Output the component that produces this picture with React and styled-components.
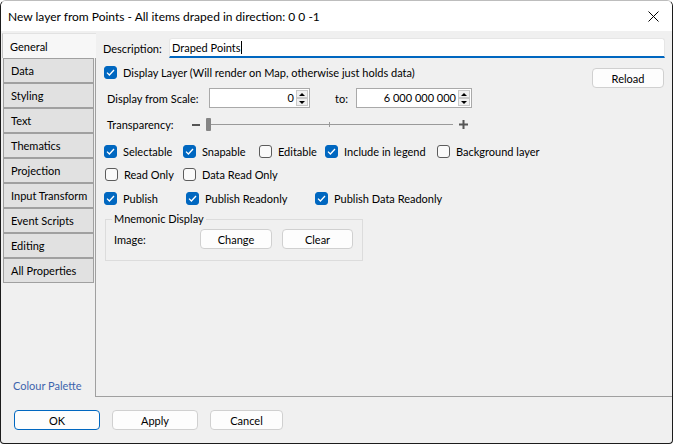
import React from "react";
import styled, { createGlobalStyle } from "styled-components";

const ACCENT = "#0067c0";
const LINE = "#a0a0a0";

const tabs = [
  "Data",
  "Styling",
  "Text",
  "Thematics",
  "Projection",
  "Input Transform",
  "Event Scripts",
  "Editing",
  "All Properties",
];

const GlobalStyle = createGlobalStyle`
  html, body { margin: 0; padding: 0; background: #ffffff; }
  body {
    font-family: Lato, "Liberation Sans", sans-serif;
    font-size: 11px;
    color: #000;
  }
  * { box-sizing: border-box; }
`;

const Check = ({ checked, label, w }) => (
  <CheckItem $w={w}>
    <Box $checked={checked}>
      {checked && (
        <svg width="9" height="7" viewBox="0 0 9 7">
          <path d="M1 3.6 L3.4 6 L8 1" fill="none" stroke="#fff" strokeWidth="1.3" />
        </svg>
      )}
    </Box>
    <span>{label}</span>
  </CheckItem>
);

const Spin = ({ value, w }) => (
  <SpinBox $w={w}>
    <SpinValue>{value}</SpinValue>
    <SpinButtons>
      <SpinHalf>
        <Arrow $up />
      </SpinHalf>
      <SpinHalf>
        <Arrow />
      </SpinHalf>
    </SpinButtons>
  </SpinBox>
);

const App = () => {
  return (
    <>
      <GlobalStyle />
      <Window>
        <TitleBar>
          <Title>New layer from Points - All items draped in direction: 0 0 -1</Title>
          <svg width="11" height="11" viewBox="0 0 11 11">
            <path d="M0.5 0.5 L10.5 10.5 M10.5 0.5 L0.5 10.5" stroke="#000" strokeWidth="1" />
          </svg>
        </TitleBar>
        <Main>
          <TabColumn>
            <ActiveTab>General</ActiveTab>
            <TabStack>
              {tabs.map((t) => (
                <Tab key={t}>{t}</Tab>
              ))}
              <PaletteLink>Colour Palette</PaletteLink>
            </TabStack>
          </TabColumn>
          <Panel>
            <DescRow>
              <DescLabel>Description:</DescLabel>
              <DescInput>
                Draped Points<Caret />
              </DescInput>
            </DescRow>
            <LayerRow>
              <Check checked label="Display Layer (Will render on Map, otherwise just holds data)" />
              <Button $w={72} $mt={2}>Reload</Button>
            </LayerRow>
            <ScaleRow>
              <FieldLabel $w={102}>Display from Scale:</FieldLabel>
              <Spin value="0" w={101} />
              <ToLabel>to:</ToLabel>
              <Spin value="6 000 000 000" w={116} />
            </ScaleRow>
            <SliderRow>
              <FieldLabel $w={85}>Transparency:</FieldLabel>
              <Minus />
              <Track>
                <Thumb />
                <Tick />
              </Track>
              <svg width="9" height="9" viewBox="0 0 9 9" style={{ marginLeft: 6 }}>
                <path d="M0 4.5 H9 M4.5 0 V9" stroke="#555" strokeWidth="2" />
              </svg>
            </SliderRow>
            <CheckRow $mt={14}>
              <Check checked label="Selectable" w={79} />
              <Check checked label="Snapable" w={76} />
              <Check label="Editable" w={66} />
              <Check checked label="Include in legend" w={112} />
              <Check label="Background layer" />
            </CheckRow>
            <CheckRow $mt={10} $pl={2}>
              <Check label="Read Only" w={78} />
              <Check label="Data Read Only" />
            </CheckRow>
            <CheckRow $mt={11}>
              <Check checked label="Publish" w={82} />
              <Check checked label="Publish Readonly" w={129} />
              <Check checked label="Publish Data Readonly" />
            </CheckRow>
            <Group>
              <Legend>Mnemonic Display</Legend>
              <GroupRow>
                <FieldLabel $w={86}>Image:</FieldLabel>
                <Button $w={72}>Change</Button>
                <Button $w={71}>Clear</Button>
              </GroupRow>
            </Group>
          </Panel>
        </Main>
        <ButtonBar>
          <Button $w={86} $primary>OK</Button>
          <Button $w={86}>Apply</Button>
          <Button $w={73}>Cancel</Button>
        </ButtonBar>
      </Window>
    </>
  );
};

const Window = styled.div`
  width: 673px;
  height: 444px;
  display: flex;
  flex-direction: column;
  background: #f0f0f0;
  border: 1px solid #1c1c1c;
  border-top-color: #bdbdbd;
  border-radius: 6px 6px 4px 4px;
  overflow: hidden;
`;

const TitleBar = styled.div`
  height: 30px;
  flex-shrink: 0;
  background: #fff;
  display: flex;
  align-items: center;
  justify-content: space-between;
  padding: 0 13px 0 7px;
`;

const Title = styled.div`
  font-size: 12px;
  color: #000;
`;

const Main = styled.div`
  height: 366px;
  flex-shrink: 0;
  display: flex;
`;

const TabColumn = styled.div`
  width: 95px;
  flex-shrink: 0;
  display: flex;
  flex-direction: column;
`;

const ActiveTab = styled.div`
  margin-top: 2px;
  margin-left: 1px;
  height: 25px;
  flex-shrink: 0;
  background: #f7f7f7;
  border-left: 1px solid #c4c4c4;
  border-top: 1px solid #e2e2e2;
  padding-left: 7px;
  display: flex;
  align-items: center;
`;

const TabStack = styled.div`
  flex: 1;
  display: flex;
  flex-direction: column;
  padding-left: 2px;
  padding-bottom: 4px;
  border-right: 1px solid ${LINE};
`;

const Tab = styled.div`
  width: 91px;
  height: 25px;
  flex-shrink: 0;
  background: #e1e1e1;
  border: 1px solid ${LINE};
  padding-left: 7px;
  display: flex;
  align-items: center;
  white-space: nowrap;
`;

const PaletteLink = styled.div`
  margin-top: auto;
  margin-left: 10px;
  color: #3d64ad;
  line-height: 14px;
`;

const Panel = styled.div`
  flex: 1;
  display: flex;
  flex-direction: column;
  padding: 7px 7px 0 7px;
  border-bottom: 1px solid ${LINE};
`;

const DescRow = styled.div`
  display: flex;
  align-items: center;
  height: 20px;
`;

const DescLabel = styled.div`
  width: 66px;
  flex-shrink: 0;
`;

const DescInput = styled.div`
  flex: 1;
  height: 20px;
  background: #fff;
  border: 1px solid #e6e6e6;
  border-bottom: 2px solid ${ACCENT};
  border-radius: 3px 3px 0 0;
  padding-left: 2px;
  display: flex;
  align-items: center;
`;

const Caret = styled.span`
  display: inline-block;
  width: 1px;
  height: 13px;
  background: #000;
`;

const LayerRow = styled.div`
  margin-top: 8px;
  height: 22px;
  display: flex;
  align-items: flex-start;
  justify-content: space-between;
  padding-left: 1px;
  padding-right: 1px;
`;

const ScaleRow = styled.div`
  height: 20px;
  display: flex;
  align-items: center;
  padding-left: 4px;
`;

const FieldLabel = styled.div`
  width: ${(p) => p.$w}px;
  flex-shrink: 0;
`;

const ToLabel = styled.div`
  margin-left: 25px;
  width: 21px;
`;

const SpinBox = styled.div`
  width: ${(p) => p.$w}px;
  height: 20px;
  background: #fff;
  border: 1px solid #a9a9a9;
  display: flex;
  align-items: stretch;
  padding: 0 1px 0 0;
`;

const SpinValue = styled.div`
  flex: 1;
  display: flex;
  align-items: center;
  justify-content: flex-end;
  padding-right: 2px;
  padding-bottom: 1px;
`;

const SpinButtons = styled.div`
  width: 12px;
  display: flex;
  flex-direction: column;
  padding: 1px 0;
`;

const SpinHalf = styled.div`
  flex: 1;
  background: #f0f0f0;
  border: 1px solid #c8c8c8;
  display: flex;
  align-items: center;
  justify-content: center;
`;

const Arrow = styled.span`
  width: 0;
  height: 0;
  border-left: 3px solid transparent;
  border-right: 3px solid transparent;
  ${(p) => (p.$up ? "border-bottom: 3px solid #000;" : "border-top: 3px solid #000;")}
`;

const SliderRow = styled.div`
  margin-top: 10px;
  height: 13px;
  display: flex;
  align-items: center;
  padding-left: 4px;
`;

const Minus = styled.span`
  width: 8px;
  height: 2px;
  background: #555;
  margin-right: 6px;
`;

const Track = styled.div`
  position: relative;
  width: 247px;
  height: 13px;
  &::before {
    content: "";
    position: absolute;
    left: 0;
    right: 0;
    top: 6px;
    height: 1px;
    background: #9a9a9a;
  }
`;

const Thumb = styled.span`
  position: absolute;
  left: 0;
  top: 0;
  width: 5px;
  height: 13px;
  background: #858585;
  border-radius: 1px;
`;

const Tick = styled.span`
  position: absolute;
  left: 123px;
  top: 4px;
  width: 1px;
  height: 5px;
  background: #9a9a9a;
`;

const CheckRow = styled.div`
  margin-top: ${(p) => p.$mt}px;
  height: 13px;
  display: flex;
  align-items: center;
  padding-left: ${(p) => p.$pl || 1}px;
`;

const CheckItem = styled.label`
  display: flex;
  align-items: center;
  gap: 6px;
  white-space: nowrap;
  ${(p) => (p.$w ? `width: ${p.$w}px; flex-shrink: 0;` : "")}
`;

const Box = styled.span`
  width: 13px;
  height: 13px;
  flex-shrink: 0;
  border-radius: 3px;
  display: flex;
  align-items: center;
  justify-content: center;
  background: ${(p) => (p.$checked ? ACCENT : "#fafafa")};
  border: 1px solid ${(p) => (p.$checked ? ACCENT : "#5c5c5c")};
`;

const Group = styled.fieldset`
  margin: 7px 0 0 2px;
  padding: 0 7px 11px 5px;
  width: 258px;
  border: 1px solid #dcdcdc;
  min-width: 0;
`;

const Legend = styled.legend`
  padding: 0 2px;
  margin-left: 1px;
  line-height: 14px;
`;

const GroupRow = styled.div`
  margin-top: 3px;
  display: flex;
  align-items: center;
  gap: 10px;
  padding-left: 3px;
  & > div:first-child {
    margin-right: -10px;
  }
`;

const Button = styled.div`
  width: ${(p) => p.$w}px;
  height: 20px;
  flex-shrink: 0;
  margin-top: ${(p) => p.$mt || 0}px;
  background: #fdfdfd;
  border: 1px solid ${(p) => (p.$primary ? ACCENT : "#d0d0d0")};
  border-radius: 4px;
  display: flex;
  align-items: center;
  justify-content: center;
  color: #000;
`;

const ButtonBar = styled.div`
  flex: 1;
  display: flex;
  gap: 12px;
  padding: 13px 0 0 13px;
`;

export default App;
